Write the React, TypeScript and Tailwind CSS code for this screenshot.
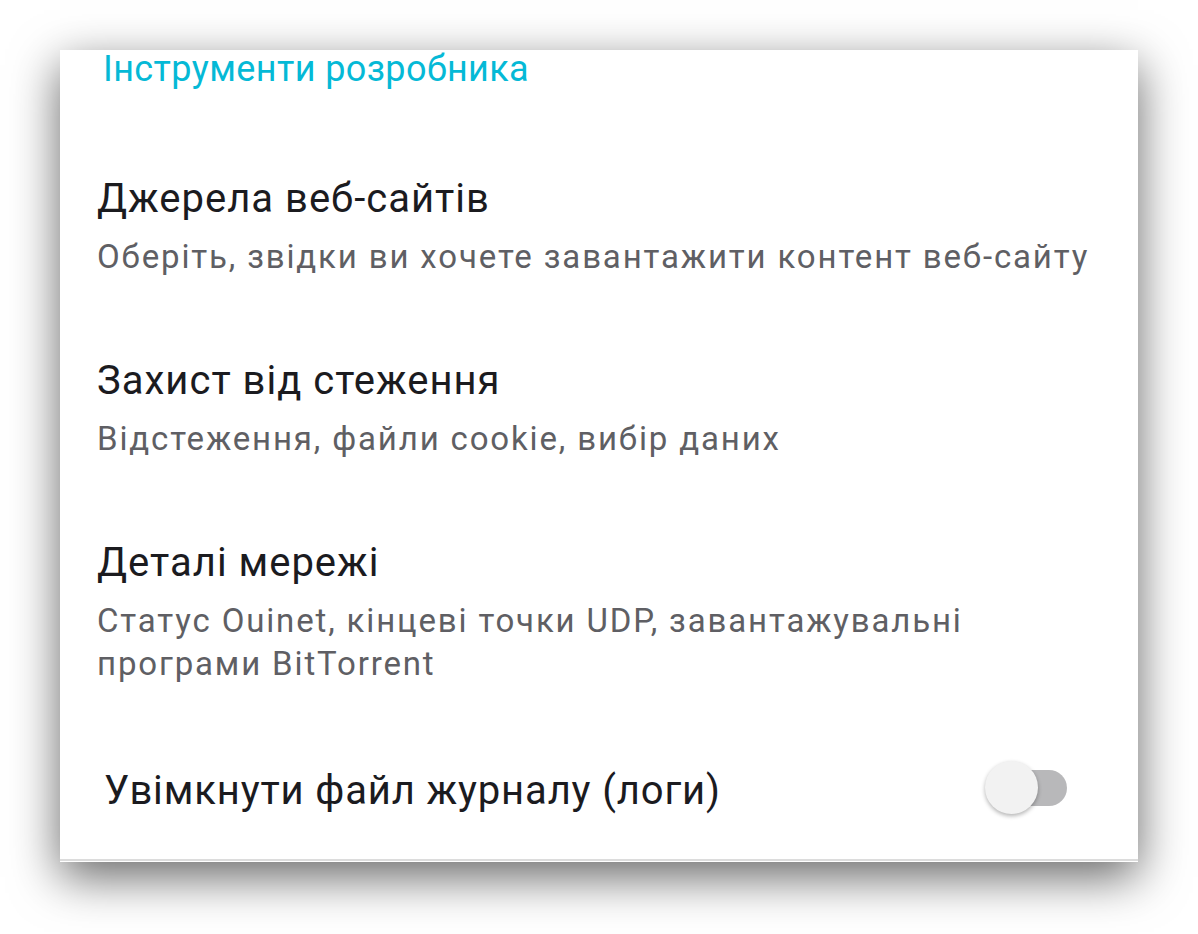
import React from "react";

const font = { fontFamily: "Roboto, 'Noto Sans', sans-serif" };

function Item({ title, sub }: { title: string; sub: React.ReactNode }) {
  return (
    <div className="py-[40px] pl-[37px] pr-[30px]">
      <div className="text-[40px] leading-[46px] tracking-[1px] text-[#1b1b1f]">{title}</div>
      <div className="mt-[13px] text-[33px] leading-[43px] tracking-[1.85px] text-[#5f5f64] whitespace-nowrap">{sub}</div>
    </div>
  );
}

export default function App() {
  return (
    <div className="w-[1198px] h-[934px] bg-white overflow-hidden" style={font}>
      <div className="ml-[60px] mt-[50px] w-[1078px] h-[812px] bg-white shadow-[0_15px_45px_rgba(0,0,0,0.6)] flex flex-col">
        <div className="pl-[43px] text-[36px] leading-[38px] tracking-[0.4px] text-[#05b9d6]">Інструменти розробника</div>
        <div className="mt-[48px]">
          <Item title="Джерела веб-сайтів" sub="Оберіть, звідки ви хочете завантажити контент веб-сайту" />
          <Item title="Захист від стеження" sub="Відстеження, файли cookie, вибір даних" />
          <Item
            title="Деталі мережі"
            sub={
              <>
                Статус Ouinet, кінцеві точки UDP, завантажувальні
                <br />
                програми BitTorrent
              </>
            }
          />
        </div>
        <div className="flex-1 flex items-start justify-between pl-[44px] pr-[71px] pt-[36px]">
          <div className="mt-[7px] text-[40px] leading-[46px] tracking-[0.86px] text-[#1b1b1f]">Увімкнути файл журналу (логи)</div>
          <div className="relative w-[82px] h-[53px]">
            <div className="absolute right-0 top-[8.5px] w-[72px] h-[36px] rounded-full bg-[#b8b8ba]" />
            <div className="absolute left-0 top-0 w-[53px] h-[53px] rounded-full bg-[#f2f2f2] shadow-[0_2px_4px_rgba(0,0,0,0.3)]" />
          </div>
        </div>
        <div className="h-[2px] bg-[#dcdcdc] mb-[1px]" />
      </div>
    </div>
  );
}
